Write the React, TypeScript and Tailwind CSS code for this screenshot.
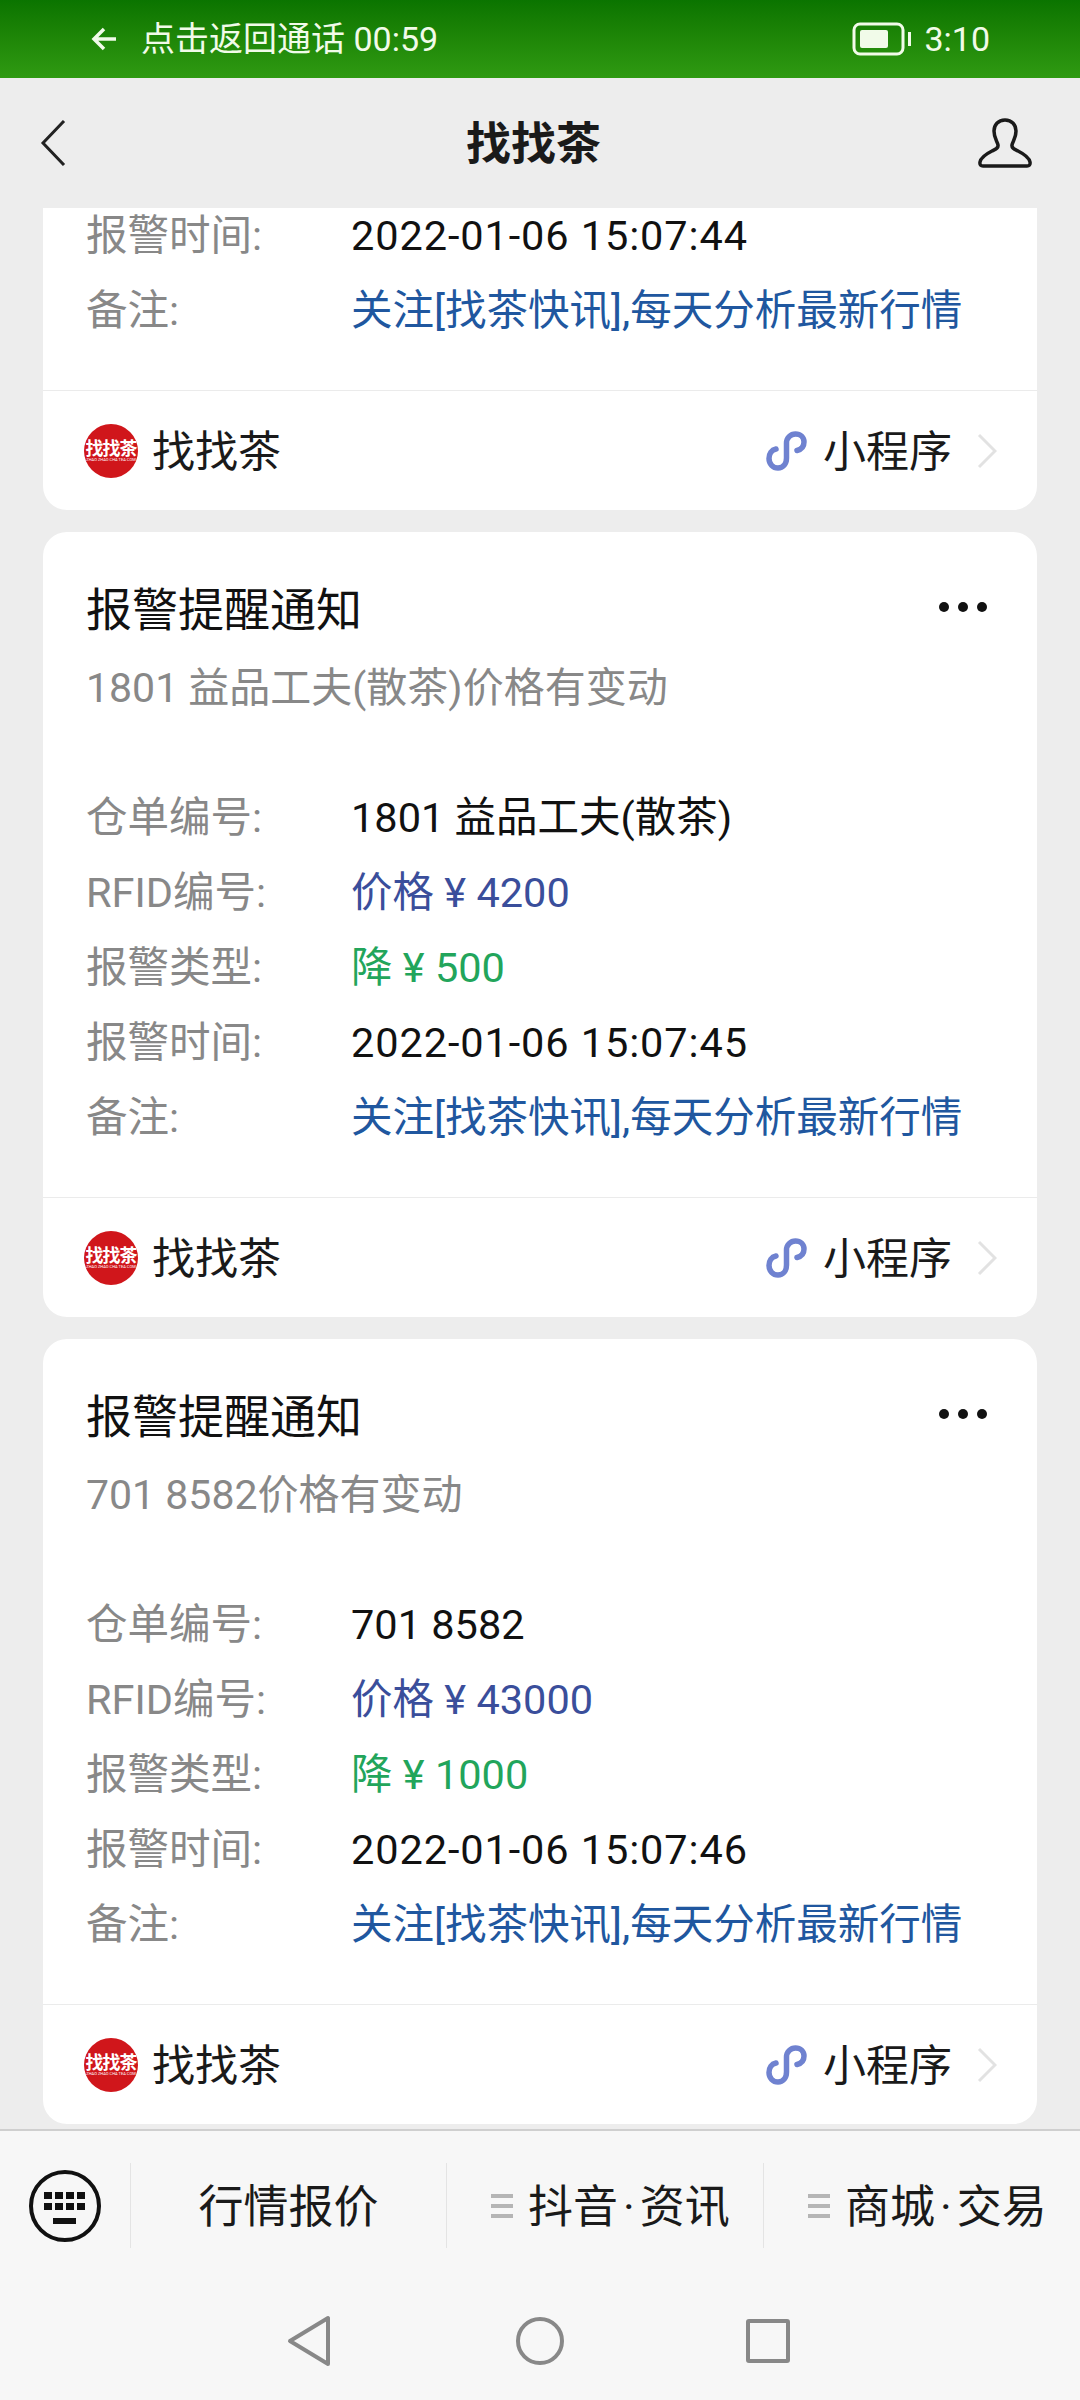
import { ReactNode } from "react";

// one labelled line in a notice card
const Row = ({ label, children, color }: { label: string; children: ReactNode; color: string }) => (
  <div className="flex h-[75px] items-center pt-[2px] text-[41.5px]">
    <div className="w-[265px] shrink-0 text-[#888888]">{label}</div>
    <div className={color}>{children}</div>
  </div>
);

const Logo = () => (
  <div className="flex h-[54px] w-[54px] shrink-0 flex-col items-center justify-center overflow-hidden rounded-full bg-[#d0161b] text-white">
    <div className="text-[18px] leading-[17px] font-bold tracking-[-1px] whitespace-nowrap">找找茶</div>
    <div className="text-[4px] leading-[5px] whitespace-nowrap">ZHAO ZHAO CHA TEA COM</div>
  </div>
);

const MiniIcon = () => (
  <svg width="44" height="40" viewBox="0 0 44 40" fill="none" className="mr-[14px]">
    <path
      d="M11 18C6.500 19 4 23 4 27.500C4 33 8 37 13 37C18 37 21.500 33 21.500 27V12C21.500 7 25.500 3 30.500 3C35.500 3 39 6.500 39 11C39 15.500 36 18.500 32 19.500"
      stroke="#6f82d0"
      strokeWidth="5.500"
      strokeLinecap="round"
    />
  </svg>
);

const CardFooter = () => (
  <div className="flex h-[120px] items-center border-t border-[#ebebeb] pr-[40px] pl-[41px] text-[43px] text-[#1a1a1a]">
    <Logo />
    <div className="ml-[14px] flex-1 pt-[3px]">找找茶</div>
    <MiniIcon />
    <div className="pt-[3px]">小程序</div>
    <svg width="20" height="36" viewBox="0 0 20 36" fill="none" className="ml-[25px]">
      <path d="M2 2L18 18L2 34" stroke="#e2e2e2" strokeWidth="3" />
    </svg>
  </div>
);

const Rows = ({ code, price, drop, time }: { code: string; price: string; drop: string; time: string }) => (
  <div className="px-[43px] pb-[42px]">
    <Row label="仓单编号:" color="text-[#111111]">{code}</Row>
    <Row label="RFID编号:" color="text-[#3a4e9b]">价格 ¥ {price}</Row>
    <Row label="报警类型:" color="text-[#22a55b]">降 ¥ {drop}</Row>
    <Row label="报警时间:" color="text-[#111111] tracking-[0.9px]">{time}</Row>
    <Row label="备注:" color="text-[#20579f]">关注[找茶快讯],每天分析最新行情</Row>
  </div>
);

const Card = (props: { code: string; price: string; drop: string; time: string }) => (
  <div className="shrink-0 overflow-hidden rounded-[24px] bg-white">
    <div className="flex items-center justify-between pt-[45px] pr-[50px] pl-[43px]">
      <div className="h-[64px] pt-[1px] text-[46px] leading-[64px] text-[#111111]">报警提醒通知</div>
      <div className="-mt-[4px] flex gap-[9px]">
        <div className="h-[10px] w-[10px] rounded-full bg-[#111111]" />
        <div className="h-[10px] w-[10px] rounded-full bg-[#111111]" />
        <div className="h-[10px] w-[10px] rounded-full bg-[#111111]" />
      </div>
    </div>
    <div className="mt-[16px] mb-[63px] h-[60px] px-[43px] pt-[1px] text-[41px] leading-[60px] text-[#888888]">
      {props.code}价格有变动
    </div>
    <Rows {...props} />
    <CardFooter />
  </div>
);

const Menu = ({ children, lines, width }: { children: ReactNode; lines?: boolean; width: string }) => (
  <div
    className={
      (lines
        ? "flex h-[85px] items-center justify-start border-l border-[#e4e4e4] pl-[44px] text-[45px] text-[#1a1a1a] "
        : "flex h-[85px] items-center justify-center border-l border-[#e4e4e4] text-[45px] text-[#1a1a1a] ") + width
    }
  >
    {lines && (
      <div className="mr-[15px] flex flex-col gap-[6px]">
        <div className="h-[4px] w-[22px] bg-[#b5b5b5]" />
        <div className="h-[4px] w-[22px] bg-[#b5b5b5]" />
        <div className="h-[4px] w-[22px] bg-[#b5b5b5]" />
      </div>
    )}
    <div className="pt-[5px] whitespace-nowrap">{children}</div>
  </div>
);

const App = () => {
  return (
    <div className="flex h-[2400px] w-[1080px] flex-col overflow-hidden bg-[#ededed] font-[Roboto,'Noto_Sans_CJK_SC',sans-serif]">
      {/* call banner */}
      <div className="flex h-[78px] shrink-0 items-center bg-gradient-to-b from-[#0a7400] to-[#2f9a12] pr-[90px] pl-[90px] text-[34px] text-[#f1fbe9]">
        <svg width="30" height="30" viewBox="0 0 30 30" fill="none" className="mr-[21px]">
          <path d="M26 15H5M14 5L4 15L14 25" stroke="#f1fbe9" strokeWidth="3.500" />
        </svg>
        <div className="flex-1">点击返回通话 00:59</div>
        <svg width="60" height="34" viewBox="0 0 60 34" fill="none" className="mr-[12px]">
          <rect x="2" y="2" width="49" height="30" rx="6" stroke="#f1fbe9" strokeWidth="3" />
          <rect x="8" y="8" width="28" height="18" rx="2" fill="#f1fbe9" />
          <rect x="56" y="10" width="3" height="14" fill="#f1fbe9" />
        </svg>
        <div>3:10</div>
      </div>

      {/* title bar */}
      <div className="flex h-[130px] shrink-0 items-center bg-[#ededed] pr-[48px] pl-[40px]">
        <svg width="26" height="46" viewBox="0 0 26 46" fill="none">
          <path d="M24 1L3 23L24 45" stroke="#222222" strokeWidth="3" />
        </svg>
        <div className="ml-[400px] flex-1 pt-[4px] text-[45px] font-bold text-[#1a1a1a]">找找茶</div>
        <svg width="54" height="50" viewBox="0 0 54 50" fill="none">
          <path
            d="M27 2C20 2 16 7 16 13C16 20 19 23 20 27C20.500 30 18 31 14 33C8 36 3 39 2 44C1.500 47 3 48 5 48H49C51 48 52.500 47 52 44C51 39 46 36 40 33C36 31 33.500 30 34 27C35 23 38 20 38 13C38 7 34 2 27 2Z"
            stroke="#1a1a1a"
            strokeWidth="3.500"
          />
        </svg>
      </div>

      {/* messages */}
      <div className="flex flex-1 flex-col gap-[22px] overflow-hidden px-[43px]">
        <div className="-mt-[10px] shrink-0 overflow-hidden rounded-b-[24px] bg-white">
          <div className="px-[43px] pb-[42px]">
            <Row label="报警时间:" color="text-[#111111] tracking-[0.9px]">2022-01-06 15:07:44</Row>
            <Row label="备注:" color="text-[#20579f]">关注[找茶快讯],每天分析最新行情</Row>
          </div>
          <CardFooter />
        </div>
        <Card code="1801 益品工夫(散茶)" price="4200" drop="500" time="2022-01-06 15:07:45" />
        <Card code="701 8582" price="43000" drop="1000" time="2022-01-06 15:07:46" />
      </div>

      {/* chat menu and system keys */}
      <div className="h-[271px] shrink-0 border-t-2 border-[#cfcfcf] bg-[#f7f7f7]">
        <div className="flex h-[150px] items-center pt-[32px] pb-[33px]">
          <div className="flex w-[130px] justify-center">
            <svg width="72" height="72" viewBox="0 0 72 72" fill="none">
              <circle cx="36" cy="36" r="34" stroke="#111111" strokeWidth="4" />
              <g fill="#111111">
                <rect x="15" y="22" width="8" height="7" />
                <rect x="26" y="22" width="8" height="7" />
                <rect x="37" y="22" width="8" height="7" />
                <rect x="48" y="22" width="8" height="7" />
                <rect x="15" y="33" width="8" height="7" />
                <rect x="26" y="33" width="8" height="7" />
                <rect x="37" y="33" width="8" height="7" />
                <rect x="48" y="33" width="8" height="7" />
                <rect x="24" y="48" width="23" height="6" />
              </g>
            </svg>
          </div>
          <Menu width="w-[316px]">行情报价</Menu>
          <Menu lines width="w-[317px]">抖音<span className="mx-[5px]">·</span>资讯</Menu>
          <Menu lines width="w-[317px]">商城<span className="mx-[5px]">·</span>交易</Menu>
        </div>
        <div className="flex items-center justify-center gap-[185px] pt-[34px] pr-[4px]">
          <svg width="44" height="52" viewBox="0 0 44 52" fill="none">
            <path d="M41 3V49L3 26L41 3Z" stroke="#888888" strokeWidth="4" strokeLinejoin="round" />
          </svg>
          <div className="h-[48px] w-[48px] rounded-full border-4 border-[#888888]" />
          <div className="-ml-[3px] h-[44px] w-[44px] rounded-[3px] border-4 border-[#888888]" />
        </div>
      </div>
    </div>
  );
};

export default App;
